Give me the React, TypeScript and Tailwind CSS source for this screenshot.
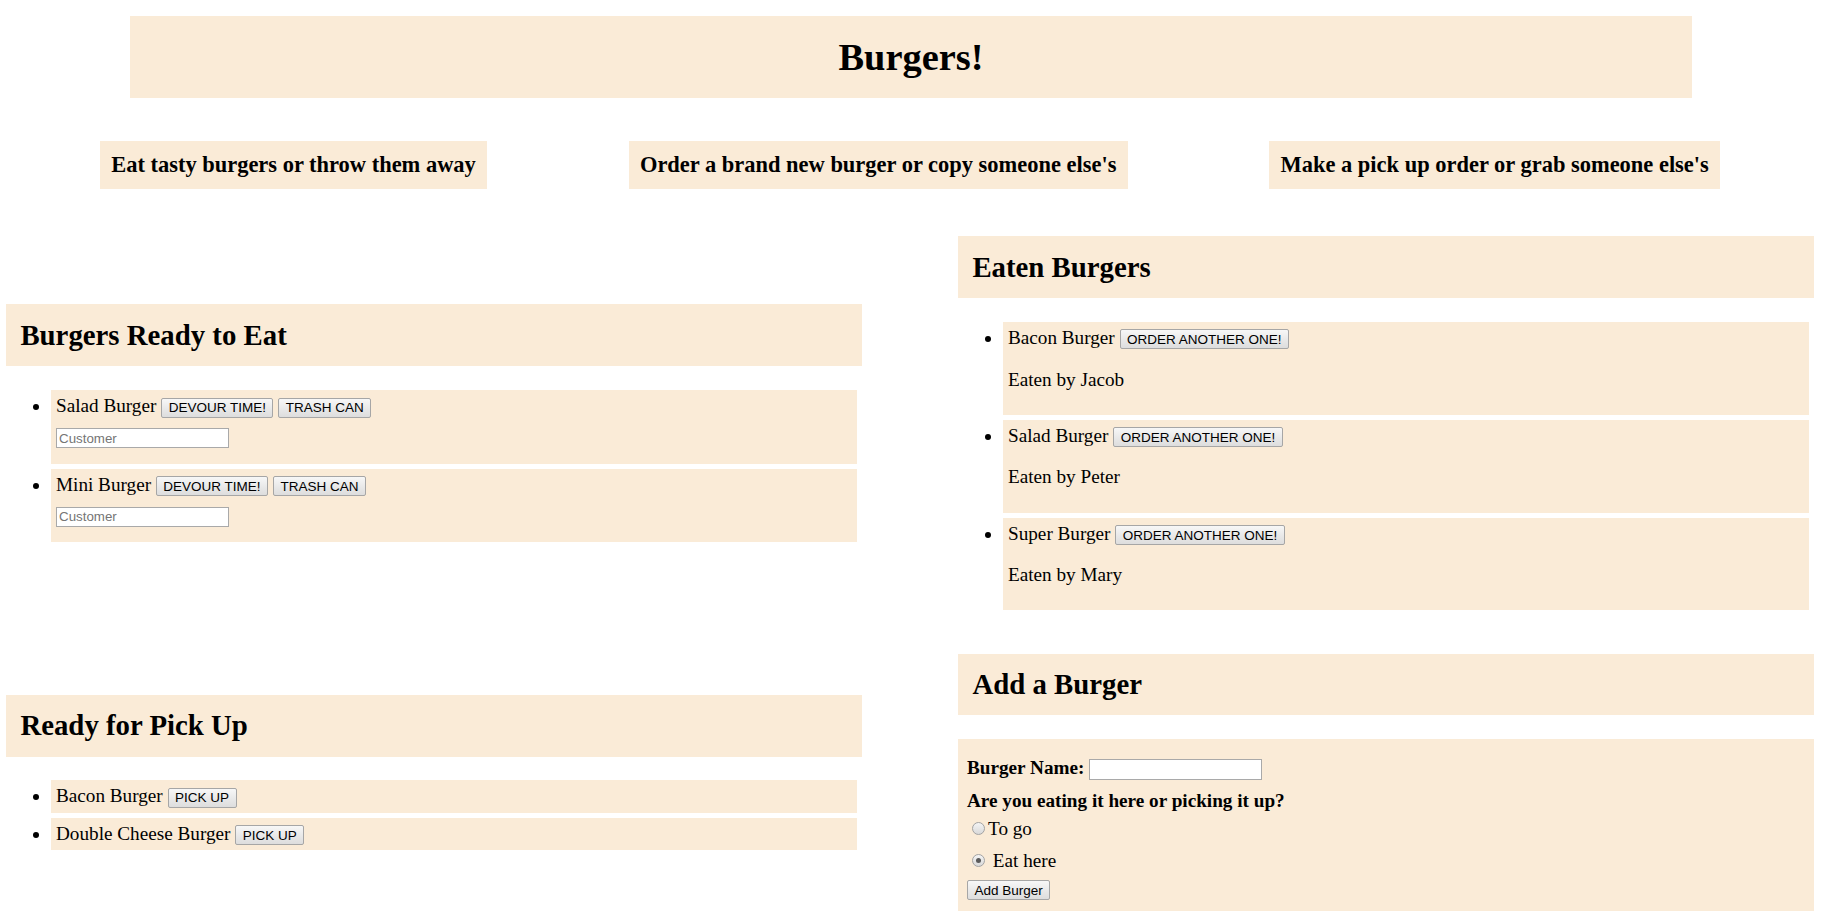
const ready = ["Salad Burger", "Mini Burger"];

const eaten = [
  { name: "Bacon Burger", customer: "Jacob" },
  { name: "Salad Burger", customer: "Peter" },
  { name: "Super Burger", customer: "Mary" },
];

const pickUp = ["Bacon Burger", "Double Cheese Burger"];

const Btn = ({ children }: { children: React.ReactNode }) => (
  <button
    type="button"
    className="inline-flex h-[20px] items-center rounded-[2px] border border-[#a6a6a6] bg-linear-to-b from-[#f7f7f7] to-[#dddddd] px-[6.5px] align-baseline font-['Liberation_Sans',Arial,sans-serif] text-[13.5px] leading-[normal] text-black"
  >
    {children}
  </button>
);

// old-style grey radio; overflow-hidden keeps its baseline at the bottom edge
const Radio = ({ checked }: { checked?: boolean }) => (
  <span className="mt-[3px] mr-[3px] ml-[5px] inline-block h-[13px] w-[13px] overflow-hidden rounded-full border border-[#a3a3a3] bg-linear-to-b from-[#f4f4f4] to-[#d9d9d9] align-baseline">
    {checked && <span className="m-[3px] block h-[5px] w-[5px] rounded-full bg-[#5a5a5a]" />}
  </span>
);

const SectionTitle = ({ children }: { children: React.ReactNode }) => (
  <h2 className="my-[23.9px] bg-[#faebd7] px-[14.4px] py-[14.4px] text-[28.8px] font-bold leading-[normal]">
    {children}
  </h2>
);

export default function App() {
  return (
    <div className="min-h-screen bg-white pb-[13px] font-['Liberation_Serif','Times_New_Roman',serif] text-[19.2px] leading-[normal] text-black">
      <div className="mx-auto mt-[16px] w-[1562px] bg-[#faebd7]">
        <h1 className="py-[19.2px] text-center text-[38.4px] font-bold leading-[normal]">
          Burgers!
        </h1>
      </div>

      <div className="mt-[42.5px] flex justify-between pr-[102px] pl-[100px]">
        {[
          "Eat tasty burgers or throw them away",
          "Order a brand new burger or copy someone else's",
          "Make a pick up order or grab someone else's",
        ].map((t) => (
          <h3
            key={t}
            className="bg-[#faebd7] p-[11.2px] text-[22.46px] font-bold leading-[normal]"
          >
            {t}
          </h3>
        ))}
      </div>

      <div className="mt-[23px] grid grid-cols-[856px_856px] items-center gap-x-[96px] pl-[6px]">
        {/* ready to eat */}
        <div>
          <SectionTitle>Burgers Ready to Eat</SectionTitle>
          <ul className="my-[19.2px] list-disc pl-[40px]">
            {ready.map((name) => (
              <li key={name} className="mx-[5px] my-[5px] bg-[#faebd7] p-[5px]">
                <div>
                  {name} <Btn>DEVOUR TIME!</Btn> <Btn>TRASH CAN</Btn>
                </div>
                <div className="my-[10.5px] leading-none">
                  <input
                    type="text"
                    placeholder="Customer"
                    className="block h-[20px] w-[173px] border border-[#a9a9a9] bg-white px-[2px] font-['Liberation_Sans',Arial,sans-serif] text-[13.33px] placeholder:text-[#757575]"
                  />
                </div>
              </li>
            ))}
          </ul>
        </div>

        {/* eaten */}
        <div>
          <SectionTitle>Eaten Burgers</SectionTitle>
          <ul className="my-[19.2px] list-disc pl-[40px]">
            {eaten.map((b) => (
              <li key={b.name} className="mx-[5px] my-[5px] bg-[#faebd7] p-[5px]">
                <div>
                  {b.name} <Btn>ORDER ANOTHER ONE!</Btn>
                </div>
                <p className="my-[19.2px]">Eaten by {b.customer}</p>
              </li>
            ))}
          </ul>
        </div>

        {/* pick up */}
        <div>
          <SectionTitle>Ready for Pick Up</SectionTitle>
          <ul className="my-[19.2px] list-disc pl-[40px]">
            {pickUp.map((name) => (
              <li key={name} className="mx-[5px] my-[5px] bg-[#faebd7] p-[5px]">
                {name} <Btn>PICK UP</Btn>
              </li>
            ))}
          </ul>
        </div>

        {/* add a burger */}
        <div>
          <SectionTitle>Add a Burger</SectionTitle>
          <form className="bg-[#faebd7] pt-[17.5px] pb-[10.5px] pl-[9px]">
            <div>
              <label className="font-bold">Burger Name:</label>{" "}
              <input
                type="text"
                className="inline-block h-[21px] w-[173px] border border-[#a9a9a9] bg-white px-[2px] align-baseline font-['Liberation_Sans',Arial,sans-serif] text-[13.33px]"
              />
            </div>
            <div className="mt-[9.9px] font-bold">
              Are you eating it here or picking it up?
            </div>
            <div className="mt-[6.5px]">
              <Radio />
              To go
            </div>
            <div className="mt-[10.4px]">
              <Radio checked /> Eat here
            </div>
            <div className="mt-[5.4px]">
              <Btn>Add Burger</Btn>
            </div>
          </form>
        </div>
      </div>
    </div>
  );
}
